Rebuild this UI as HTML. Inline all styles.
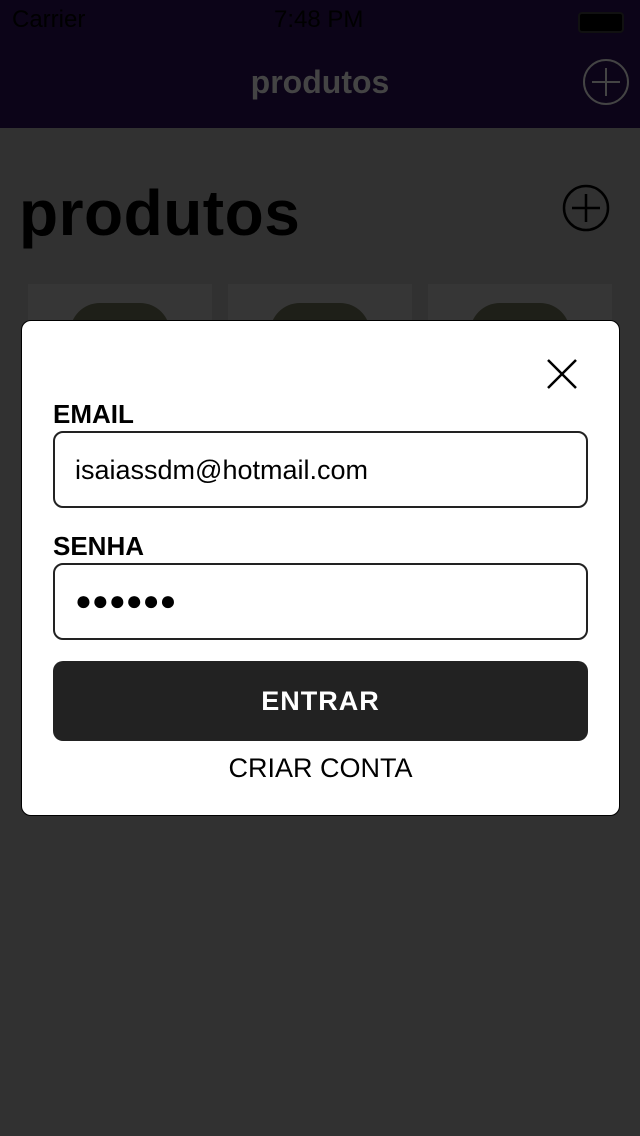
<!DOCTYPE html>
<html><head><style>
body{margin:0;width:640px;height:1136px;background:#313131;font-family:"Liberation Sans",sans-serif;position:relative;overflow:hidden}
.nav{position:absolute;left:0;top:0;width:640px;height:128px;background:#0c0418}
.abs{position:absolute}
.card{position:absolute;top:284px;width:184px;height:60px;background:#363636}
.shirt{position:absolute;top:303px;width:100px;height:30px;background:#1e1f18;border-radius:40px 40px 0 0}
.modal{position:absolute;left:21px;top:320px;width:599px;height:496px;background:#fff;border:1px solid #000;border-radius:10px;box-sizing:border-box}
.lbl{position:absolute;left:31px;font-weight:bold;font-size:26px;color:#000}
.inp{position:absolute;left:31px;width:535px;height:77px;border:2px solid #222;border-radius:10px;box-sizing:border-box}
</style></head><body>
<div class="nav"></div>
<div class="abs" style="left:12px;top:6px;font-size:24px;color:#000">Carrier</div>
<div class="abs" style="left:274px;top:6px;font-size:24px;color:#000">7:48 PM</div>
<div class="abs" style="left:578px;top:12px;width:42px;height:17px;border-radius:4px;background:#000;border:2px solid #111"></div>
<div class="abs" style="left:0;width:640px;top:64px;text-align:center;font-size:32px;font-weight:bold;color:#444">produtos</div>
<svg class="abs" style="left:582px;top:58px" width="48" height="48"><circle cx="24" cy="24" r="22" fill="none" stroke="#444" stroke-width="2"/><path d="M24 10V38M10 24H38" stroke="#444" stroke-width="2"/></svg>
<div class="abs" style="left:19px;top:176px;font-size:64px;font-weight:bold;color:#000;letter-spacing:0.5px">produtos</div>
<svg class="abs" style="left:561px;top:184px" width="50" height="48"><circle cx="25" cy="24" r="22" fill="none" stroke="#000" stroke-width="2.5"/><path d="M25 10V38M11 24H39" stroke="#000" stroke-width="2.5"/></svg>
<div class="card" style="left:28px"></div><div class="card" style="left:228px"></div><div class="card" style="left:428px"></div>
<div class="shirt" style="left:70px"></div><div class="shirt" style="left:270px"></div><div class="shirt" style="left:470px"></div>
<div class="modal">
<svg class="abs" style="left:524px;top:37px" width="32" height="32"><path d="M2 2L30 30M30 2L2 30" stroke="#000" stroke-width="2.5"/></svg>
<div class="lbl" style="top:78px">EMAIL</div>
<div class="inp" style="top:110px"><div class="abs" style="left:20px;top:22px;font-size:27px">isaiassdm@hotmail.com</div></div>
<div class="lbl" style="top:210px">SENHA</div>
<div class="inp" style="top:242px"><div class="abs" style="left:20px;top:20px;font-size:28px;letter-spacing:0px">●●●●●●</div></div>
<div class="abs" style="left:31px;top:340px;width:535px;height:80px;background:#222;border-radius:10px;color:#fff;font-weight:bold;font-size:27px;text-align:center;line-height:80px;letter-spacing:1px">ENTRAR</div>
<div class="abs" style="left:0;width:597px;top:432px;text-align:center;font-size:27px">CRIAR CONTA</div>
</div>
</body></html>
